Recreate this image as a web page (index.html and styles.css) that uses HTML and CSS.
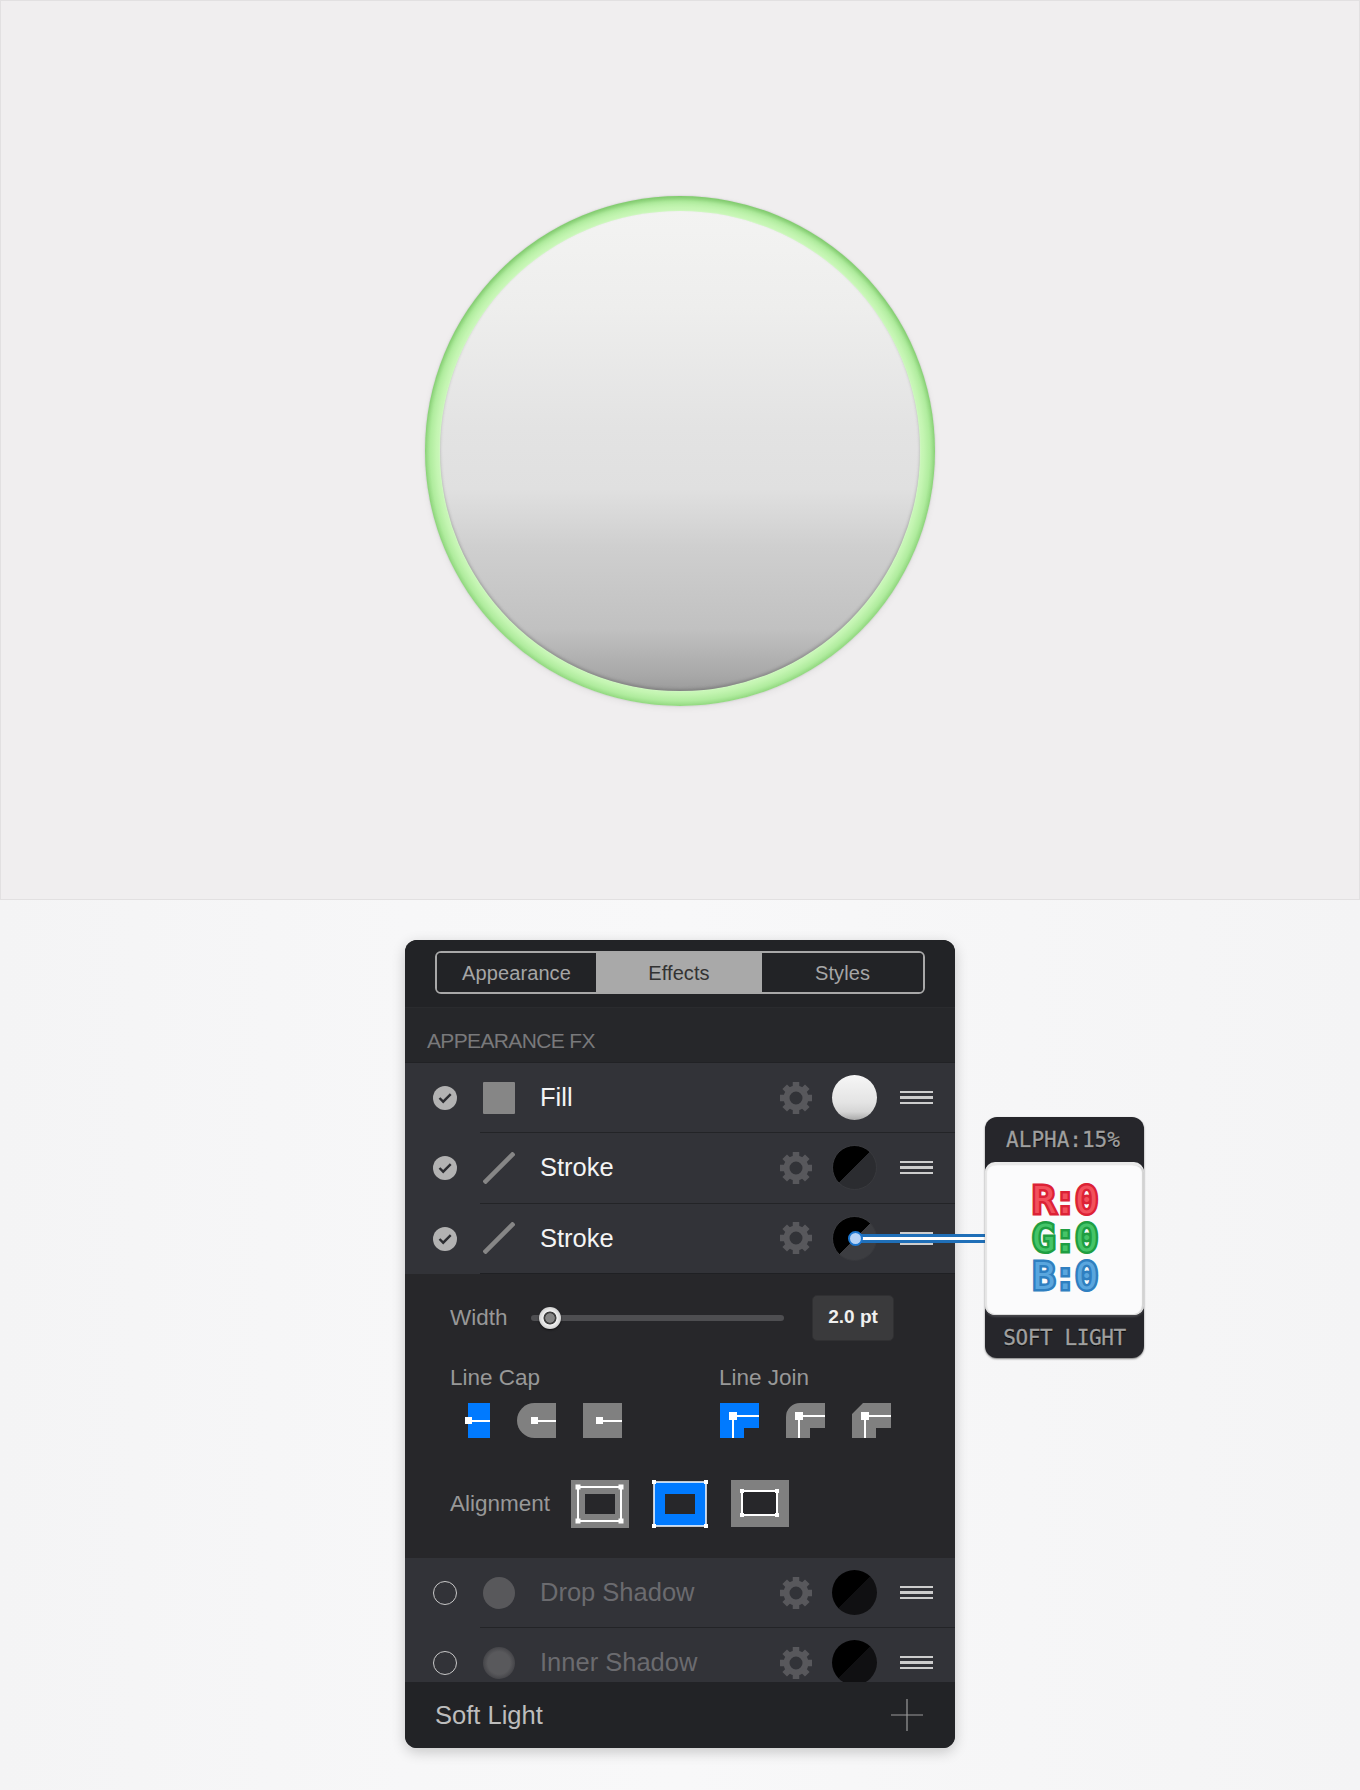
FILE: index.html
```html
<!DOCTYPE html>
<html lang="en">
<head>
    <meta charset="UTF-8">
    <meta name="viewport" content="width=device-width, initial-scale=1.0">
    <title>Appearance FX</title>
    <link rel="stylesheet" href="styles.css">
</head>
<body>
    <svg class="defs" width="0" height="0">
        <symbol id="gear" viewBox="0 0 34 34">
            <circle cx="17" cy="17" r="9.5" fill="none" stroke="currentColor" stroke-width="6"/>
            <g stroke="currentColor" stroke-width="6.5">
                <path d="M17 1V8M17 26V33M1 17H8M26 17H33"/>
                <path d="M5.7 5.7L10.6 10.6M23.4 23.4L28.3 28.3M5.7 28.3L10.6 23.4M23.4 10.6L28.3 5.7"/>
            </g>
        </symbol>
    </svg>

    <div class="canvas">
        <div class="ring">
            <div class="ring-fill"></div>
        </div>
    </div>

    <div class="lower">
        <div class="panel">
            <div class="tabs-bar">
                <div class="tabs">
                    <div class="tab first">Appearance</div>
                    <div class="tab active">Effects</div>
                    <div class="tab">Styles</div>
                </div>
            </div>
            <div class="section-head">APPEARANCE FX</div>

            <div class="row">
                <span class="check on"><svg width="24" height="24" viewBox="0 0 24 24"><path d="M6.500 12l3.700 3.700 7.500-7.500" fill="none" stroke="#2b2c30" stroke-width="2.400"/></svg></span>
                <div class="row-body">
                    <span class="type-icon square"></span>
                    <span class="label">Fill</span>
                    <svg class="gear"><use href="#gear"/></svg>
                    <span class="swatch white"></span>
                    <span class="handle"></span>
                </div>
            </div>
            <div class="row">
                <span class="check on"><svg width="24" height="24" viewBox="0 0 24 24"><path d="M6.500 12l3.700 3.700 7.500-7.500" fill="none" stroke="#2b2c30" stroke-width="2.400"/></svg></span>
                <div class="row-body">
                    <svg class="type-icon" viewBox="0 0 32 32"><path d="M1 31L31 1" stroke="#868686" stroke-width="4.500"/></svg>
                    <span class="label">Stroke</span>
                    <svg class="gear"><use href="#gear"/></svg>
                    <span class="swatch half"></span>
                    <span class="handle"></span>
                </div>
            </div>
            <div class="row">
                <span class="check on"><svg width="24" height="24" viewBox="0 0 24 24"><path d="M6.500 12l3.700 3.700 7.500-7.500" fill="none" stroke="#2b2c30" stroke-width="2.400"/></svg></span>
                <div class="row-body last">
                    <svg class="type-icon" viewBox="0 0 32 32"><path d="M1 31L31 1" stroke="#868686" stroke-width="4.500"/></svg>
                    <span class="label">Stroke</span>
                    <svg class="gear"><use href="#gear"/></svg>
                    <span class="swatch half light"></span>
                    <span class="handle"></span>
                </div>
            </div>

            <div class="detail">
                <div class="width-row">
                    <span class="field-label">Width</span>
                    <div class="slider"><span class="knob"></span></div>
                    <div class="value">2.0 pt</div>
                </div>

                <div class="line-opts">
                    <div class="opt-group cap">
                        <div class="field-label">Line Cap</div>
                        <div class="icons">
                            <svg class="cap-icon" width="46" height="35" viewBox="0 0 46 35">
                                <rect x="3" width="22" height="35" fill="#007aff"/>
                                <path d="M3 18H25" stroke="#fff" stroke-width="2"/>
                                <rect y="14" width="7" height="7" fill="#fff"/>
                            </svg>
                            <svg class="cap-icon" width="39" height="35" viewBox="0 0 39 35">
                                <path d="M39 0H17.5a17.5 17.5 0 0 0 0 35H39Z" fill="#808080"/>
                                <path d="M17 18H39" stroke="#fff" stroke-width="2"/>
                                <rect x="14" y="14" width="7" height="7" fill="#fff"/>
                            </svg>
                            <svg class="cap-icon" width="39" height="35" viewBox="0 0 39 35">
                                <rect width="39" height="35" fill="#808080"/>
                                <path d="M17 18H39" stroke="#fff" stroke-width="2"/>
                                <rect x="13" y="14" width="7" height="7" fill="#fff"/>
                            </svg>
                        </div>
                    </div>
                    <div class="opt-group">
                        <div class="field-label">Line Join</div>
                        <div class="icons join">
                            <svg width="39" height="35" viewBox="0 0 39 35">
                                <path d="M0 0H39V25H24V35H0Z" fill="#007aff"/>
                                <path d="M13 35V13H39" fill="none" stroke="#fff" stroke-width="2"/>
                                <rect x="9" y="9" width="8" height="8" fill="#fff"/>
                            </svg>
                            <svg width="39" height="35" viewBox="0 0 39 35">
                                <path d="M14 0H39V25H24V35H0V14A14 14 0 0 1 14 0Z" fill="#808080"/>
                                <path d="M13 35V13H39" fill="none" stroke="#fff" stroke-width="2"/>
                                <rect x="9" y="9" width="8" height="8" fill="#fff"/>
                            </svg>
                            <svg width="39" height="35" viewBox="0 0 39 35">
                                <path d="M11 0H39V25H24V35H0V11Z" fill="#808080"/>
                                <path d="M13 35V13H39" fill="none" stroke="#fff" stroke-width="2"/>
                                <rect x="9" y="9" width="8" height="8" fill="#fff"/>
                            </svg>
                        </div>
                    </div>
                </div>

                <div class="align-row">
                    <span class="field-label">Alignment</span>
                    <svg width="58" height="48" viewBox="0 0 58 48">
                        <rect width="58" height="48" fill="#808080"/>
                        <rect x="14" y="14" width="30" height="20" fill="#27272a"/>
                        <path d="M7 7H50V41H7Z" fill="none" stroke="#fff" stroke-width="2"/>
                        <path d="M4.500 4.500h5v5h-5zM47.500 4.500h5v5h-5zM4.500 38.500h5v5h-5zM47.500 38.500h5v5h-5z" fill="#fff"/>
                    </svg>
                    <svg width="58" height="48" viewBox="0 0 58 48">
                        <rect x="3" y="2" width="52" height="44" fill="#007aff" stroke="#fff" stroke-width="1.500"/>
                        <rect x="14" y="14" width="30" height="20" fill="#27272a"/>
                        <path d="M1 0h4v4h-4zM53 0h4v4h-4zM1 44h4v4h-4zM53 44h4v4h-4z" fill="#fff"/>
                    </svg>
                    <svg width="58" height="48" viewBox="0 0 58 48">
                        <rect width="58" height="47" fill="#808080"/>
                        <rect x="11" y="11" width="35" height="24" fill="#27272a" stroke="#fff" stroke-width="2"/>
                        <path d="M9 9h4v4h-4zM44 9h4v4h-4zM9 33h4v4h-4zM44 33h4v4h-4z" fill="#fff"/>
                    </svg>
                </div>
            </div>

            <div class="fx-rows">
                <div class="row dim">
                    <span class="check"></span>
                    <div class="row-body">
                        <span class="type-icon dot"></span>
                        <span class="label">Drop Shadow</span>
                        <svg class="gear"><use href="#gear"/></svg>
                        <span class="swatch half deep"></span>
                        <span class="handle"></span>
                    </div>
                </div>
                <div class="row dim">
                    <span class="check"></span>
                    <div class="row-body">
                        <span class="type-icon dot soft"></span>
                        <span class="label">Inner Shadow</span>
                        <svg class="gear"><use href="#gear"/></svg>
                        <span class="swatch half deep"></span>
                        <span class="handle"></span>
                    </div>
                </div>
            </div>

            <div class="footer">
                <span>Soft Light</span>
                <svg width="32" height="32" viewBox="0 0 32 32"><path d="M16 0V32M0 16H32" stroke="#9a9a9a" stroke-width="1.200"/></svg>
            </div>

            <div class="connector"><span class="connector-dot"></span></div>

            <div class="callout">
                <div class="callout-top">ALPHA:15%</div>
                <div class="callout-body">
                    <div class="rgb red">R:0</div>
                    <div class="rgb green">G:0</div>
                    <div class="rgb blue">B:0</div>
                </div>
                <div class="callout-bottom">SOFT LIGHT</div>
            </div>
        </div>
    </div>
</body>
</html>
```

FILE: styles.css
```css
body {
    margin: 0;
    height: 1790px;
    overflow: hidden;
    font-family: "Liberation Sans", Arial, sans-serif;
    background: #f6f6f7;
}
.defs {
    display: block;
    height: 0;
}

/* top artboard */
.canvas {
    height: 900px;
    box-sizing: border-box;
    padding-top: 195px;
    border: 1px solid #e2e0e1;
    background: #f0eeef;
}
.ring {
    width: 510px;
    height: 510px;
    margin: 0 auto;
    padding: 15px;
    box-sizing: border-box;
    border-radius: 50%;
    background: radial-gradient(closest-side, #c9f7b8 94.2%, #c4f5b2 95.5%, #b0ec9e 98%, #93d981 100%);
    box-shadow: 0 0 2px rgba(0, 0, 0, 0.18), 0 2px 7px rgba(0, 0, 0, 0.06), inset 0 3px 4px rgba(90, 170, 70, 0.35);
}
.ring-fill {
    height: 100%;
    border-radius: 50%;
    background: linear-gradient(#f3f3f2, #eeeeed 20%, #e3e3e3 45%, #e0e0e0 58%, #cfcfcf 70%, #c1c1c1 87%, #a7a7a7 97%, #9b9b9b);
    box-shadow: inset 0 -2px 3px rgba(80, 80, 80, 0.35), 0 0 2px rgba(255, 255, 255, 0.4);
}

/* panel below */
.lower {
    height: 890px;
    padding-top: 40px;
    box-sizing: border-box;
    background: linear-gradient(90deg, #f4f4f5, #f7f7f8 30%, #f8f8f9 50%, #f6f6f7 75%, #f4f4f5);
}
.panel {
    position: relative;
    width: 550px;
    height: 808px;
    margin-left: 405px;
    border-radius: 12px;
    background: #27272a;
    box-shadow: 0 4px 14px rgba(0, 0, 0, 0.2);
}
.tabs-bar {
    height: 67px;
    box-sizing: border-box;
    padding: 11px 30px 0;
    border-radius: 12px 12px 0 0;
    background: #222326;
}
.tabs {
    display: flex;
    height: 43px;
    box-sizing: border-box;
    border: 2px solid #a8a8a8;
    border-radius: 6px;
    overflow: hidden;
}
.tab {
    flex: 1;
    text-align: center;
    line-height: 41px;
    font-size: 20px;
    letter-spacing: 0.1px;
    color: #a6a6a6;
    background: #222326;
}
.tab.first {
    flex: none;
    width: 159px;
}
.tab.active {
    flex: none;
    width: 166px;
    color: #333;
    background: #a9a9a9;
}
.section-head {
    height: 56px;
    box-sizing: border-box;
    padding: 20px 0 0 22px;
    font-size: 21px;
    line-height: 26px;
    letter-spacing: -0.65px;
    color: #79797b;
    background: #26272a;
    border-top: 1px solid #2a2b2e;
    border-bottom: 1px solid #212225;
}

/* effect rows */
.row {
    display: flex;
    height: 70.33px;
    background: #323338;
}
.check {
    flex: none;
    width: 24px;
    height: 24px;
    margin: 23px 23px 0 28px;
    box-sizing: border-box;
    border: 1.5px solid #c8c8c8;
    border-radius: 50%;
}
.check.on {
    border: none;
    background: #b2b2b2;
}
.check svg {
    display: block;
}
.row-body {
    flex: 1;
    display: flex;
    align-items: center;
    padding: 0 22px 0 3px;
    border-bottom: 1px solid #232427;
}
.row-body.last {
    border-bottom-color: #1f2023;
}
.type-icon {
    flex: none;
    width: 32px;
    height: 32px;
}
.type-icon.square {
    background: #868686;
    border-radius: 1px;
}
.type-icon.dot {
    border-radius: 50%;
    background: #58585b;
}
.type-icon.dot.soft {
    background: radial-gradient(closest-side, #59595c 70%, #454549);
}
.label {
    flex: 1;
    margin-left: 25px;
    font-size: 25.500px;
    color: #f4f4f4;
}
.gear {
    flex: none;
    width: 34px;
    height: 34px;
    color: #58585c;
}
.swatch {
    flex: none;
    width: 45px;
    height: 45px;
    margin: 0 23px 0 19px;
    box-sizing: border-box;
    border-radius: 50%;
}
.swatch.white {
    background: linear-gradient(#f6f6f6, #e4e4e4 60%, #d5d5d5 82%, #a9a9a9);
}
.swatch.half {
    border: 1px solid #38393d;
    background: linear-gradient(135deg, #000 50%, #2b2c30 50%);
}
.swatch.half.light {
    background: linear-gradient(135deg, #000 50%, #3c3d41 50%);
}
.swatch.half.deep {
    border: none;
    background: linear-gradient(135deg, #000 50%, #101012 50%);
}
.handle {
    flex: none;
    width: 33px;
    height: 9px;
    border-top: 2.500px solid #cdcdcd;
    border-bottom: 2.500px solid #cdcdcd;
    background: linear-gradient(#cdcdcd, #cdcdcd) center / 100% 3px no-repeat;
}
.dim .label {
    color: #6b6b6f;
}
.fx-rows {
    height: 124px;
    overflow: hidden;
}
.footer {
    display: flex;
    align-items: center;
    justify-content: space-between;
    height: 66px;
    padding: 1px 32px 0 30px;
    box-sizing: border-box;
    border-radius: 0 0 12px 12px;
    font-size: 25.500px;
    color: #bdbdbd;
    background: #222326;
}

/* stroke options */
.detail {
    height: 284px;
    box-sizing: border-box;
    padding: 21px 0 0 45px;
}
.field-label {
    font-size: 22.500px;
    color: #989898;
}
.width-row {
    display: flex;
    align-items: center;
    height: 46px;
}
.width-row .field-label {
    width: 81px;
}
.slider {
    position: relative;
    width: 253px;
    height: 6px;
    margin-right: 28px;
    border-radius: 3px;
    background: #4e4e51;
}
.knob {
    position: absolute;
    left: 8px;
    top: -8px;
    width: 22px;
    height: 22px;
    border-radius: 50%;
    background: radial-gradient(closest-side, #858585 40%, #3f3f3f 46%, #3f3f3f 56%, #f2f2f2 62%, #d0d0d0);
    box-shadow: 0 1px 2px rgba(0, 0, 0, 0.6);
}
.value {
    width: 82px;
    height: 46px;
    box-sizing: border-box;
    line-height: 42px;
    text-align: center;
    font-size: 19px;
    font-weight: bold;
    color: #f0f0f0;
    background: #3a3a3c;
    border: 1px solid #303032;
    border-radius: 5px;
}
.line-opts {
    display: flex;
    margin-top: 24px;
}
.opt-group.cap {
    width: 269px;
}
.icons {
    display: flex;
    gap: 27px;
    margin: 12px 0 0 15px;
}
.icons.join {
    margin-left: 1px;
}
.cap-icon:first-child {
    margin-right: -21px;
}
.icons svg {
    display: block;
}
.align-row {
    display: flex;
    align-items: center;
    gap: 22px;
    margin-top: 42px;
}
.align-row .field-label {
    width: 99px;
}

/* callout and its connector sit over the panel */
.connector {
    position: absolute;
    left: 450px;
    top: 294px;
    width: 130px;
    height: 3px;
    border-top: 3px solid #1f6fb8;
    border-bottom: 3px solid #1f6fb8;
    background: #fff;
}
.connector-dot {
    position: absolute;
    left: -7px;
    top: -6px;
    width: 15px;
    height: 15px;
    box-sizing: border-box;
    border: 2.500px solid #1c76cf;
    border-radius: 50%;
    background: #b5d2f6;
}
.callout {
    position: absolute;
    left: 580px;
    top: 177px;
    width: 159px;
    height: 241px;
    border-radius: 12px;
    background: #26262b;
    box-shadow: 0 1px 2px rgba(0, 0, 0, 0.5);
    font-family: "DejaVu Sans Mono", "Liberation Mono", monospace;
    font-size: 21px;
    color: #a0a0a0;
    text-align: center;
    text-shadow: 0 1px 1px #000;
    -webkit-text-stroke: 0.3px #a0a0a0;
}
.callout-top {
    height: 45px;
    line-height: 47px;
    padding-right: 3px;
    box-sizing: border-box;
}
.callout-body {
    height: 153px;
    box-sizing: border-box;
    padding-top: 16px;
    border-radius: 10px;
    background: #fbfbfc;
    border-top: 3px solid #e9e9e9;
    box-shadow: inset 0 -1px 0 #ddd, inset -2px 0 1px #d2d2d2, inset 2px 0 1px #e5e5e5, 0 2px 2px rgba(255, 255, 255, 0.15);
}
.callout-bottom {
    height: 43px;
    line-height: 46px;
    letter-spacing: -0.4px;
    white-space: pre;
}
.rgb {
    font-size: 38px;
    line-height: 38px;
    letter-spacing: -1.500px;
    text-shadow: none;
    paint-order: stroke fill;
}
.red {
    color: #f2505c;
    -webkit-text-stroke: 5px #dc2236;
}
.green {
    color: #45c468;
    -webkit-text-stroke: 5px #1f9e42;
}
.blue {
    color: #5aa6de;
    -webkit-text-stroke: 5px #2f7fc0;
}
```
